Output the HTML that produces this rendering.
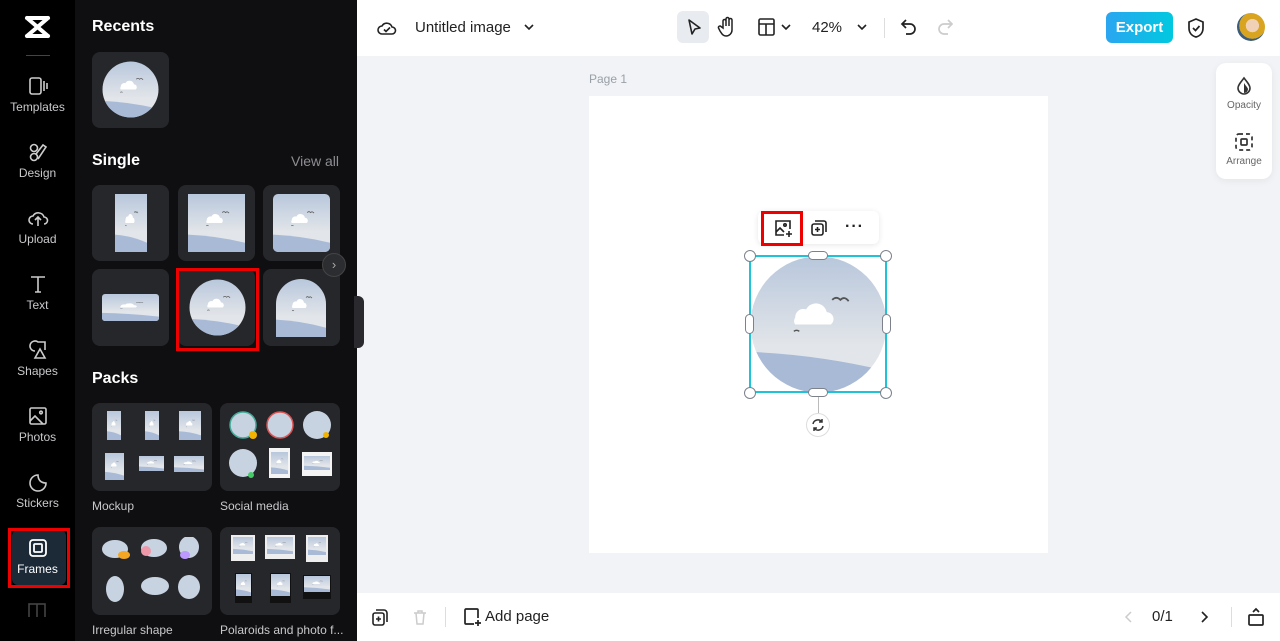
<!DOCTYPE html>
<html><head><meta charset="utf-8">
<style>
*{margin:0;padding:0;box-sizing:border-box}
body{width:1280px;height:641px;overflow:hidden;font-family:"Liberation Sans",sans-serif;background:#f1f3f6;position:relative}
.abs{position:absolute}
.rail{left:0;top:0;width:75px;height:641px;background:#000}
.ri{position:absolute;left:0;width:75px;text-align:center;color:#c9c9cc;font-size:12px}
.ri svg{display:block;margin:0 auto 3px}
.panel{left:75px;top:0;width:282px;height:641px;background:#0f0f11}
.h{position:absolute;color:#fff;font-weight:bold;font-size:16px}
.card{position:absolute;background:#26272b;border-radius:8px}
.lbl{position:absolute;color:#c9c9cc;font-size:12px}
.top{left:357px;top:0;width:923px;height:56px;background:#fff}
.bot{left:357px;top:593px;width:923px;height:48px;background:#fff}
.hd{position:absolute;width:10px;height:10px;border:1px solid #7c818a;background:#fff;border-radius:50%}
</style></head><body>
<svg width="0" height="0" style="position:absolute">
<defs>
<linearGradient id="sky" x1="0" y1="0" x2="0" y2="1"><stop offset="0" stop-color="#b8c7dc"/><stop offset="0.65" stop-color="#e2e5e9"/></linearGradient>
<symbol id="img" viewBox="0 0 100 100" preserveAspectRatio="none">
<rect width="100" height="100" fill="url(#sky)"/>
<path d="M0 70 Q50 72 100 84 L100 100 0 100Z" fill="#a8bad6"/>
<path d="M33 45 a6 6 0 0 1 8-6 a8 8 0 0 1 15 2 a5 5 0 0 1 3 9 h-26 a4 4 0 0 1 0-5z" fill="#fff"/>
<path d="M60 32 q3-3 6 0 q3-3 6 1" stroke="#555" stroke-width="1.3" fill="none"/>
<path d="M32 55 q2-1.5 4 0" stroke="#555" stroke-width="1" fill="none"/>
</symbol>
</defs></svg>

<div class="abs rail">
 <svg class="abs" style="left:24px;top:15px" width="27" height="24" viewBox="0 0 27 24"><path d="M3 3 L24 3 M3 21 L24 21 M3 3 L24 21 M24 3 L3 21" stroke="#fff" stroke-width="4" stroke-linecap="round" fill="none"/></svg>
 <div class="abs" style="left:26px;top:55px;width:24px;height:1px;background:#444"></div>
 <div class="ri" style="top:75px"><svg width="22" height="22" viewBox="0 0 22 22" fill="none" stroke="#ccc" stroke-width="1.6"><rect x="3" y="3" width="11" height="16" rx="2"/><path d="M17 6v10M20 8v6"/></svg>Templates</div>
 <div class="ri" style="top:141px"><svg width="22" height="22" viewBox="0 0 22 22" fill="none" stroke="#ccc" stroke-width="1.6"><circle cx="7" cy="7" r="3.5"/><circle cx="7" cy="16" r="3.5"/><path d="M11 18 L19 6 L16 4 L9 13"/></svg>Design</div>
 <div class="ri" style="top:207px"><svg width="22" height="22" viewBox="0 0 22 22" fill="none" stroke="#ccc" stroke-width="1.6"><path d="M6 17a4 4 0 0 1 0-8 a6 6 0 0 1 11 1 a3.5 3.5 0 0 1 0 7"/><path d="M11 19v-8M8 13l3-3 3 3"/></svg>Upload</div>
 <div class="ri" style="top:273px"><svg width="22" height="22" viewBox="0 0 22 22" fill="none" stroke="#ccc" stroke-width="1.6"><path d="M4 4h14M11 4v15M8 19h6"/></svg>Text</div>
 <div class="ri" style="top:339px"><svg width="22" height="22" viewBox="0 0 22 22" fill="none" stroke="#ccc" stroke-width="1.6"><path d="M8 12a5 5 0 1 1 3-9h7v8M13 10l-5 9h10z"/></svg>Shapes</div>
 <div class="ri" style="top:405px"><svg width="22" height="22" viewBox="0 0 22 22" fill="none" stroke="#ccc" stroke-width="1.6"><rect x="3" y="3" width="16" height="16" rx="1.5"/><path d="M3 16l5-5 8 8"/><circle cx="14" cy="7.5" r="1.3"/></svg>Photos</div>
 <div class="ri" style="top:471px"><svg width="22" height="22" viewBox="0 0 22 22" fill="none" stroke="#ccc" stroke-width="1.6"><path d="M19 12a8 8 0 1 1-8-8 c0 5 3 8 8 8z"/></svg>Stickers</div>
 <div class="abs" style="left:12px;top:530px;width:54px;height:55px;background:#1c2a38;border-radius:6px"></div>
 <div class="abs" style="left:8px;top:528px;width:62px;height:60px;border:3px solid #e00"></div>
 <div class="ri" style="top:537px;color:#fff"><svg width="22" height="22" viewBox="0 0 22 22" fill="none" stroke="#fff" stroke-width="1.8"><rect x="3" y="3" width="16" height="16" rx="3"/><rect x="7" y="7" width="8" height="8" rx="1"/></svg>Frames</div>
 <svg class="abs" style="left:28px;top:603px" width="18" height="14"><rect x="1" y="1" width="16" height="14" fill="none" stroke="#444" stroke-width="1.6"/><path d="M9 1v14" stroke="#444" stroke-width="1.6"/></svg>
</div>

<div class="abs panel">
 <div class="h" style="left:17px;top:18px">Recents</div>
 <div class="card" style="left:17px;top:52px;width:77px;height:76px"><svg class="abs" style="left:10px;top:9px" width="57" height="57"><defs><clipPath id="c0"><circle cx="28.5" cy="28.5" r="28"/></clipPath></defs><g clip-path="url(#c0)"><use href="#img" width="57" height="57"/></g></svg></div>
 <div class="h" style="left:17px;top:152px">Single</div>
 <div class="abs" style="left:216px;top:153px;color:#8d8e93;font-size:14px">View all</div>
 <div class="card" style="left:17px;top:185px;width:77px;height:76px"><svg class="abs" style="left:23px;top:9px" width="32" height="58"><use href="#img" width="32" height="58"/></svg></div>
 <div class="card" style="left:103px;top:185px;width:77px;height:76px"><svg class="abs" style="left:10px;top:9px" width="57" height="58"><use href="#img" width="57" height="58"/></svg></div>
 <div class="card" style="left:188px;top:185px;width:77px;height:76px"><svg class="abs" style="left:10px;top:9px" width="57" height="58"><defs><clipPath id="c1"><rect width="57" height="58" rx="5"/></clipPath></defs><g clip-path="url(#c1)"><use href="#img" width="57" height="58"/></g></svg></div>
 <div class="card" style="left:17px;top:269px;width:77px;height:77px"><svg class="abs" style="left:10px;top:25px" width="57" height="27"><defs><clipPath id="c2"><rect width="57" height="27" rx="3"/></clipPath></defs><g clip-path="url(#c2)"><use href="#img" width="57" height="27"/></g></svg></div>
 <div class="card" style="left:103px;top:269px;width:77px;height:77px"><svg class="abs" style="left:11px;top:10px" width="57" height="57"><defs><clipPath id="c3"><circle cx="28.5" cy="28.5" r="28"/></clipPath></defs><g clip-path="url(#c3)"><use href="#img" width="57" height="57"/></g></svg></div>
 <div class="abs" style="left:101px;top:268px;width:83px;height:83px;border:3px solid #e00"></div>
 <div class="card" style="left:188px;top:269px;width:77px;height:77px"><svg class="abs" style="left:13px;top:10px" width="50" height="58"><defs><clipPath id="c4"><path d="M0 58V25a25 25 0 0 1 50 0v33z"/></clipPath></defs><g clip-path="url(#c4)"><use href="#img" width="50" height="58"/></g></svg></div>
 <div class="abs" style="left:247px;top:253px;width:24px;height:24px;border-radius:50%;background:#2c2d31;border:1px solid #444;color:#aaa;font-size:13px;text-align:center;line-height:21px">›</div>
 <div class="h" style="left:17px;top:370px">Packs</div>
 <div class="card" style="left:17px;top:403px;width:120px;height:88px">
  <svg class="abs" style="left:15px;top:8px" width="14" height="29"><use href="#img" width="14" height="29"/></svg>
  <svg class="abs" style="left:53px;top:8px" width="14" height="29"><use href="#img" width="14" height="29"/></svg>
  <svg class="abs" style="left:87px;top:8px" width="22" height="29"><use href="#img" width="22" height="29"/></svg>
  <svg class="abs" style="left:13px;top:50px" width="19" height="27"><use href="#img" width="19" height="27"/></svg>
  <svg class="abs" style="left:47px;top:53px" width="25" height="15"><use href="#img" width="25" height="15"/></svg>
  <svg class="abs" style="left:82px;top:53px" width="30" height="16"><use href="#img" width="30" height="16"/></svg>
 </div>
 <div class="lbl" style="left:17px;top:499px">Mockup</div>
 <div class="card" style="left:145px;top:403px;width:120px;height:88px">
  <svg class="abs" style="left:8px;top:7px" width="30" height="30"><circle cx="15" cy="15" r="13" fill="#c8d3e2" stroke="#4a9" stroke-width="1.5"/><circle cx="25" cy="25" r="4" fill="#f3b400"/></svg>
  <svg class="abs" style="left:45px;top:7px" width="30" height="30"><circle cx="15" cy="15" r="13" fill="#c8d3e2" stroke="#d55" stroke-width="1.5"/></svg>
  <svg class="abs" style="left:82px;top:7px" width="30" height="30"><circle cx="15" cy="15" r="14" fill="#c8d3e2"/><circle cx="24" cy="25" r="3" fill="#f3b400"/></svg>
  <svg class="abs" style="left:8px;top:45px" width="30" height="31"><circle cx="15" cy="15" r="14" fill="#c8d3e2"/><circle cx="23" cy="27" r="3" fill="#4c6"/></svg>
  <svg class="abs" style="left:49px;top:45px" width="21" height="30"><rect width="21" height="30" fill="#f4f4f4"/><use href="#img" x="2" y="4" width="17" height="22"/></svg>
  <svg class="abs" style="left:82px;top:49px" width="30" height="24"><rect width="30" height="24" fill="#f4f4f4"/><use href="#img" x="2" y="4" width="26" height="14"/></svg>
 </div>
 <div class="lbl" style="left:145px;top:499px">Social media</div>
 <div class="card" style="left:17px;top:527px;width:120px;height:88px">
  <svg class="abs" style="left:8px;top:10px" width="100" height="70" viewBox="0 0 100 70"><ellipse cx="15" cy="12" rx="13" ry="9" fill="#c8d3e2"/><ellipse cx="24" cy="18" rx="6" ry="4" fill="#f5a623"/><ellipse cx="54" cy="11" rx="13" ry="9" fill="#c8d3e2"/><ellipse cx="46" cy="14" rx="5" ry="5" fill="#e9a"/><ellipse cx="89" cy="10" rx="10" ry="11" fill="#c8d3e2"/><ellipse cx="85" cy="18" rx="5" ry="4" fill="#b9f"/><ellipse cx="15" cy="52" rx="9" ry="13" fill="#c8d3e2"/><ellipse cx="55" cy="49" rx="14" ry="9" fill="#c8d3e2"/><ellipse cx="89" cy="50" rx="11" ry="12" fill="#c8d3e2"/></svg>
 </div>
 <div class="lbl" style="left:17px;top:623px">Irregular shape</div>
 <div class="card" style="left:145px;top:527px;width:120px;height:88px">
  <svg class="abs" style="left:11px;top:8px" width="24" height="26"><rect width="24" height="26" fill="#eee"/><use href="#img" x="2" y="2" width="20" height="17"/></svg>
  <svg class="abs" style="left:45px;top:8px" width="30" height="24"><rect width="30" height="24" fill="#eee"/><use href="#img" x="2" y="2" width="26" height="17"/></svg>
  <svg class="abs" style="left:86px;top:8px" width="22" height="27"><rect width="22" height="27" fill="#eee"/><use href="#img" x="2" y="2" width="18" height="18"/></svg>
  <svg class="abs" style="left:15px;top:46px" width="17" height="30"><rect width="17" height="30" fill="#111"/><use href="#img" x="1" y="1" width="15" height="22"/></svg>
  <svg class="abs" style="left:50px;top:46px" width="21" height="30"><rect width="21" height="30" fill="#111"/><use href="#img" x="1" y="1" width="19" height="22"/></svg>
  <svg class="abs" style="left:83px;top:48px" width="28" height="24"><rect width="28" height="24" fill="#111"/><use href="#img" x="1" y="1" width="26" height="16"/></svg>
 </div>
 <div class="lbl" style="left:145px;top:623px">Polaroids and photo f...</div>
 <div class="abs" style="left:279px;top:296px;width:10px;height:52px;background:#2a2a2e;border-radius:0 6px 6px 0"></div>
</div>

<div class="abs top">
 <svg class="abs" style="left:20px;top:18px" width="20" height="20" viewBox="0 0 20 20" fill="none" stroke="#222" stroke-width="1.6"><path d="M5 16a4 4 0 0 1 0-8 a5.5 5.5 0 0 1 10 1 a3.5 3.5 0 0 1 0 7z"/><path d="M7 11.5l2 2 4-4"/></svg>
 <div class="abs" style="left:58px;top:19px;font-size:15px;color:#222">Untitled image</div>
 <svg class="abs" style="left:166px;top:22px" width="12" height="10"><path d="M2 3l4 4 4-4" stroke="#222" stroke-width="1.6" fill="none"/></svg>
 <div class="abs" style="left:320px;top:11px;width:32px;height:32px;background:#e8ebef;border-radius:6px"></div>
 <svg class="abs" style="left:327px;top:17px" width="20" height="20"><path d="M5 3l11 8-5 1-3 5z" stroke="#222" stroke-width="1.6" fill="none" stroke-linejoin="round"/></svg>
 <svg class="abs" style="left:360px;top:16px" width="20" height="22" viewBox="0 0 20 22" fill="none" stroke="#222" stroke-width="1.5"><path d="M6 12V5a1.5 1.5 0 0 1 3 0v5V3a1.5 1.5 0 0 1 3 0v7V4a1.5 1.5 0 0 1 3 0v10a6 6 0 0 1-6 6c-3 0-4-2-6-5l-1.5-3a1.5 1.5 0 0 1 2.5-1.5z"/></svg>
 <svg class="abs" style="left:400px;top:17px" width="20" height="20" fill="none" stroke="#222" stroke-width="1.6"><rect x="2" y="2" width="15" height="16" rx="1.5"/><path d="M2 7h15M9 7v11"/></svg>
 <svg class="abs" style="left:423px;top:22px" width="12" height="10"><path d="M2 3l4 4 4-4" stroke="#222" stroke-width="1.6" fill="none"/></svg>
 <div class="abs" style="left:455px;top:19px;font-size:15px;color:#222">42%</div>
 <svg class="abs" style="left:499px;top:22px" width="12" height="10"><path d="M2 3l4 4 4-4" stroke="#222" stroke-width="1.6" fill="none"/></svg>
 <div class="abs" style="left:527px;top:18px;width:1px;height:20px;background:#ddd"></div>
 <svg class="abs" style="left:542px;top:17px" width="20" height="20" fill="none" stroke="#222" stroke-width="1.7"><path d="M7 3L3 7l4 4M3 7h8a5 5 0 0 1 0 10H7"/></svg>
 <svg class="abs" style="left:578px;top:17px" width="20" height="20" fill="none" stroke="#ccc" stroke-width="1.7"><path d="M13 3l4 4-4 4M17 7H9a5 5 0 0 0 0 10h4"/></svg>
 <div class="abs" style="left:749px;top:12px;width:67px;height:31px;border-radius:6px;background:linear-gradient(90deg,#2aa6f0,#00c8e0);color:#fff;font-weight:bold;font-size:15px;text-align:center;line-height:31px">Export</div>
 <svg class="abs" style="left:829px;top:17px" width="20" height="22" fill="none" stroke="#222" stroke-width="1.7"><path d="M10 2l7 3v6c0 5-3 8-7 9-4-1-7-4-7-9V5z"/><path d="M7 11l2.5 2.5 4-4.5"/></svg>
 <div class="abs" style="left:880px;top:13px;width:28px;height:28px;border-radius:50%;background:radial-gradient(circle at 55% 45%,#f1d1b5 0 30%,#d9a520 31% 60%,#3b5c7a 61%)"></div>
</div>

<div class="abs" style="left:589px;top:72px;font-size:12px;color:#9aa0a8">Page 1</div>
<div class="abs" style="left:589px;top:96px;width:459px;height:457px;background:#fff"></div>

<div class="abs" style="left:1216px;top:63px;width:56px;height:116px;background:#fff;border-radius:10px;box-shadow:0 2px 8px rgba(0,0,0,0.06)">
 <svg class="abs" style="left:19px;top:13px" width="18" height="20" fill="none" stroke="#333" stroke-width="1.6"><path d="M9 2C6 6 3 9 3 12a6 6 0 0 0 12 0c0-3-3-6-6-10z"/><path d="M9 18V7c2 3 4 5 4 6a4 4 0 0 1-4 4z" fill="#333" stroke="none"/></svg>
 <div class="abs" style="left:0;width:56px;top:37px;text-align:center;font-size:10px;color:#666">Opacity</div>
 <svg class="abs" style="left:18px;top:69px" width="20" height="20" fill="none" stroke="#333" stroke-width="1.7"><rect x="2" y="2" width="16" height="16" rx="3" stroke-dasharray="4 3"/><rect x="7" y="7" width="6" height="6" rx="1"/></svg>
 <div class="abs" style="left:0;width:56px;top:93px;text-align:center;font-size:10px;color:#666">Arrange</div>
</div>

<!-- selected element -->
<svg class="abs" style="left:750px;top:256px" width="137" height="137"><defs><clipPath id="cc"><circle cx="68.5" cy="68.5" r="68"/></clipPath></defs><g clip-path="url(#cc)"><use href="#img" width="137" height="137"/></g></svg>
<div class="abs" style="left:749px;top:255px;width:138px;height:138px;border:2px solid #1ec3d8"></div>
<div class="hd" style="left:744px;top:250px;width:12px;height:12px"></div>
<div class="hd" style="left:880px;top:250px;width:12px;height:12px"></div>
<div class="hd" style="left:744px;top:387px;width:12px;height:12px"></div>
<div class="hd" style="left:880px;top:387px;width:12px;height:12px"></div>
<div class="hd" style="left:808px;top:251px;width:20px;height:9px;border-radius:5px"></div>
<div class="hd" style="left:808px;top:388px;width:20px;height:9px;border-radius:5px"></div>
<div class="hd" style="left:745px;top:314px;width:9px;height:20px;border-radius:5px"></div>
<div class="hd" style="left:882px;top:314px;width:9px;height:20px;border-radius:5px"></div>
<div class="abs" style="left:818px;top:397px;width:1px;height:16px;background:#bbb"></div>
<div class="abs" style="left:806px;top:413px;width:24px;height:24px;border-radius:50%;background:#fff;border:1px solid #ddd"></div>
<svg class="abs" style="left:811px;top:418px" width="14" height="14" fill="none" stroke="#333" stroke-width="1.5"><path d="M2 6a5 5 0 0 1 9-2M12 8a5 5 0 0 1-9 2M11 1v3h-3M3 13v-3h3"/></svg>

<div class="abs" style="left:758px;top:211px;width:121px;height:33px;background:#fff;border-radius:6px;box-shadow:0 1px 6px rgba(0,0,0,0.1)"></div>
<svg class="abs" style="left:773px;top:218px" width="20" height="20" fill="none" stroke="#222" stroke-width="1.6"><path d="M11 17H3V3h14v8"/><path d="M3 14l4-4 4 4"/><circle cx="12" cy="7" r="1.2"/><path d="M16 13v6M13 16h6"/></svg>
<div class="abs" style="left:761px;top:211px;width:42px;height:35px;border:3px solid #e00"></div>
<svg class="abs" style="left:809px;top:218px" width="20" height="20" fill="none" stroke="#222" stroke-width="1.6"><rect x="3" y="6" width="11" height="11" rx="2"/><path d="M6 3h9a2 2 0 0 1 2 2v9M8.5 9v5M6 11.5h5"/></svg>
<div class="abs" style="left:845px;top:218px;font-size:16px;font-weight:bold;color:#222;letter-spacing:1px">···</div>

<div class="abs bot">
 <svg class="abs" style="left:14px;top:15px" width="18" height="19" fill="none" stroke="#222" stroke-width="1.6"><rect x="2" y="5" width="11" height="12" rx="2"/><path d="M5 2h8a3 3 0 0 1 3 3v9M7.5 8.5v5M5 11h5"/></svg>
 <svg class="abs" style="left:55px;top:15px" width="16" height="18" fill="none" stroke="#ccc" stroke-width="1.5"><path d="M2 5h12M6 5V3h4v2M4 5l1 11h6l1-11"/></svg>
 <div class="abs" style="left:88px;top:14px;width:1px;height:20px;background:#ddd"></div>
 <svg class="abs" style="left:105px;top:14px" width="20" height="20" fill="none" stroke="#222" stroke-width="1.7"><path d="M12 17H4a1 1 0 0 1-1-1V3a1 1 0 0 1 1-1h11a1 1 0 0 1 1 1v8"/><path d="M16 13v6M13 16h6"/></svg>
 <div class="abs" style="left:128px;top:15px;font-size:15px;color:#222">Add page</div>
 <svg class="abs" style="left:767px;top:17px" width="10" height="14"><path d="M7 2L2 7l5 5" stroke="#ccc" stroke-width="1.5" fill="none"/></svg>
 <div class="abs" style="left:795px;top:15px;font-size:15px;color:#222">0/1</div>
 <svg class="abs" style="left:842px;top:17px" width="10" height="14"><path d="M3 2l5 5-5 5" stroke="#222" stroke-width="1.6" fill="none"/></svg>
 <div class="abs" style="left:874px;top:14px;width:1px;height:20px;background:#ddd"></div>
 <svg class="abs" style="left:890px;top:14px" width="18" height="20" fill="none" stroke="#222" stroke-width="1.7"><rect x="2" y="8" width="14" height="10" rx="1"/><path d="M6 5l3-3 3 3"/></svg>
</div>
</body></html>
